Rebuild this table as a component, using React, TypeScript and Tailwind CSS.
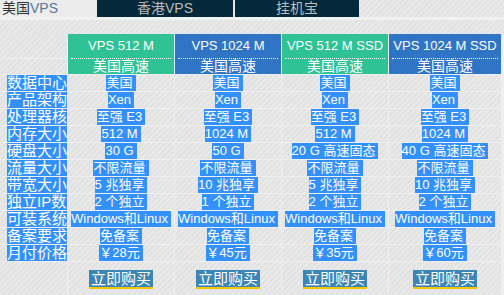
import React from "react";

const hatch =
  "bg-[repeating-linear-gradient(135deg,#e2e2e2_0px,#e2e2e2_2px,#e9e9e9_2px,#e9e9e9_4px)]";

const labels = [
  "数据中心",
  "产品架构",
  "处理器核",
  "内存大小",
  "硬盘大小",
  "流量大小",
  "带宽大小",
  "独立IP数",
  "可装系统",
  "备案要求",
  "月付价格",
];

const plans = [
  {
    name: "VPS 512 M",
    color: "bg-[#2ec295]",
    vals: ["美国", "Xen", "至强 E3", "512 M", "30 G", "不限流量", "5 兆独享", "2 个独立", "Windows和Linux", "免备案", "￥28元"],
  },
  {
    name: "VPS 1024 M",
    color: "bg-[#2f74c5]",
    vals: ["美国", "Xen", "至强 E3", "1024 M", "50 G", "不限流量", "10 兆独享", "1 个独立", "Windows和Linux", "免备案", "￥45元"],
  },
  {
    name: "VPS 512 M SSD",
    color: "bg-[#2ec295]",
    vals: ["美国", "Xen", "至强 E3", "512 M", "20 G 高速固态", "不限流量", "5 兆独享", "2 个独立", "Windows和Linux", "免备案", "￥35元"],
  },
  {
    name: "VPS 1024 M SSD",
    color: "bg-[#2f74c5]",
    vals: ["美国", "Xen", "至强 E3", "1024 M", "40 G 高速固态", "不限流量", "10 兆独享", "2 个独立", "Windows和Linux", "免备案", "￥60元"],
  },
];

const font = "font-['Liberation_Sans','Noto_Sans_CJK_SC',sans-serif]";

export default function App() {
  return (
    <div className={`w-[504px] h-[295px] overflow-hidden bg-[#e6e6e6] ${font}`}>
      {/* tabs */}
      <div className={`flex h-[17px] ${hatch}`}>
        <div className="w-[97px] bg-[#ececec] text-[14px] leading-[17px] pl-[2px] text-[#333]">
          美国<span className="text-[#5a7a96]">VPS</span>
        </div>
        <div className="w-[136px] bg-[#03293a] text-[14px] leading-[17px] text-center text-[#bdbdbd]">
          香港VPS
        </div>
        <div className="w-[2px]" />
        <div className="w-[124px] bg-[#03293a] text-[14px] leading-[17px] text-center text-[#bdbdbd]">
          挂机宝
        </div>
      </div>
      <div className="h-[3px] bg-[#f1f1f1]" />
      <div className={`h-[14px] ${hatch}`} />
      {/* table */}
      <div className="grid grid-cols-[67px_106px_106px_106px_112px] gap-px bg-[#efefef]">
        {/* header */}
        <div className={`h-[40px] ${hatch} flex flex-col`}>
          <div className="h-[25px] border-b border-dotted border-white mx-[4px] ml-[4px] mr-[2px]" />
        </div>
        {plans.map((p) => (
          <div key={p.name} className={`h-[40px] ${p.color} flex flex-col text-white`}>
            <div className="h-[25px] border-b border-dotted border-white mx-[3px] text-[13px] leading-[23px] text-center">
              {p.name}
            </div>
            <div className="h-[15px] text-[14px] leading-[15px] text-center">美国高速</div>
          </div>
        ))}
        {labels.map((label, i) => (
          <React.Fragment key={label}>
            <div className={`h-[16px] ${hatch} pl-[7px]`}>
              <div className="h-[16px] bg-[#3390ff] text-white text-[15px] leading-[16px] whitespace-nowrap">
                {label}
              </div>
            </div>
            {plans.map((p) => (
              <div key={p.name} className={`h-[16px] ${hatch} flex justify-center`}>
                <span className="h-[16px] bg-[#3390ff] text-white text-[13px] leading-[16px] whitespace-nowrap pr-[3px]">
                  {p.vals[i]}
                </span>
              </div>
            ))}
          </React.Fragment>
        ))}
        {/* buttons */}
        <div className={`h-[40px] ${hatch}`} />
        {plans.map((p) => (
          <div key={p.name} className={`h-[40px] ${hatch} flex justify-center pt-[8px]`}>
            <div className="w-[64px] h-[19px] bg-[#3b86b4] border-b-2 border-[#f5c500] text-white text-[15px] leading-[17px] text-center">
              立即购买
            </div>
          </div>
        ))}
      </div>
    </div>
  );
}
